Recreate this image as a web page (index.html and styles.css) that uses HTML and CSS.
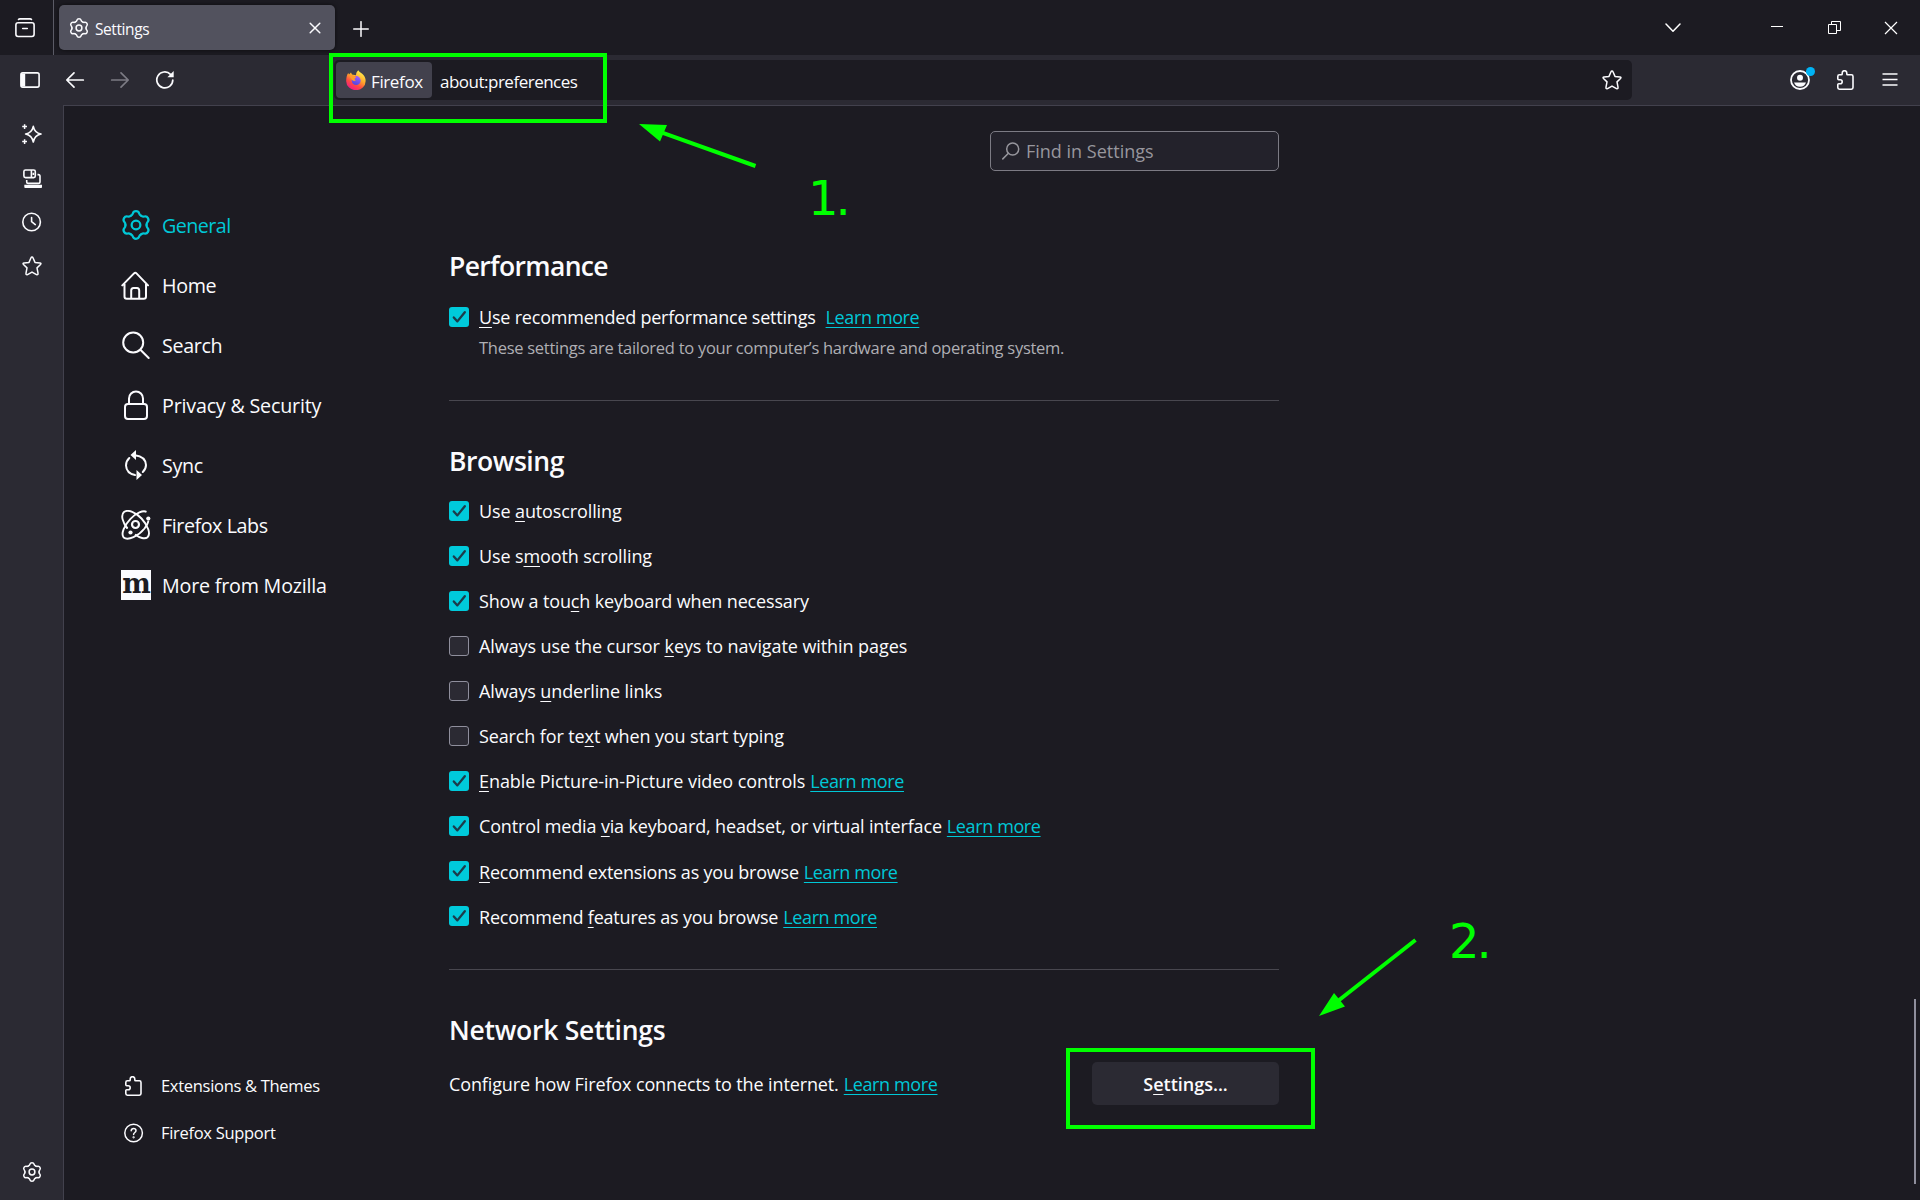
FILE: index.html
```html
<!DOCTYPE html>
<html lang="en">
<head>
<meta charset="utf-8">
<title>Settings</title>
<link rel="stylesheet" href="styles.css">
</head>
<body>
<svg class="defs" aria-hidden="true">
  <defs>
    <path id="tooth" d="M-3.5-6.1Q-2.4-6.65-2.1-7.7Q-1.7-9.2 0-9.2Q1.7-9.2 2.1-7.7Q2.4-6.65 3.5-6.1"/>
    <symbol id="gear" viewBox="-10 -10 20 20">
      <g fill="none" stroke="currentColor" stroke-width="1.5" stroke-linecap="round">
        <use href="#tooth"/><use href="#tooth" transform="rotate(60)"/><use href="#tooth" transform="rotate(120)"/>
        <use href="#tooth" transform="rotate(180)"/><use href="#tooth" transform="rotate(240)"/><use href="#tooth" transform="rotate(300)"/>
        <circle r="2.9"/>
      </g>
    </symbol>
    <symbol id="puzzle" viewBox="0 0 20 20">
      <path d="M3.4 4.8H5.4Q6.2 4.8 6.2 4V3a2.3 2.3 0 0 1 4.6 0V4Q10.8 4.8 11.6 4.8H15.4Q17 4.8 17 6.4V17.6Q17 19.2 15.4 19.2H3.4Q1.8 19.2 1.8 17.6V14.6Q1.8 13.7 2.7 13.7H4.2a2 2 0 0 0 0-4H2.7Q1.8 9.7 1.8 8.8V6.4Q1.8 4.8 3.4 4.8Z" fill="none" stroke="currentColor" stroke-width="1.6"/>
    </symbol>
    <symbol id="star" viewBox="0 0 20 20">
      <path d="M10 1.1Q10.7 1.1 11.1 2L13 6.4L17.9 6.9Q19.7 7.2 18.5 8.5L15 11.9L16 17.2Q16.2 19.2 14.5 18.6L10 16.1L5.500 18.6Q3.8 19.2 4 17.2L5 11.900L1.500 8.500Q.3 7.200 2.100 6.900L7 6.400L8.900 2Q9.300 1.100 10 1.100Z" fill="none" stroke="currentColor" stroke-width="1.5" stroke-linejoin="round"/>
    </symbol>
    <symbol id="tick" viewBox="0 0 20 20">
      <path d="M4.800 10.400L8.400 14.400L15.800 5.200" fill="none" stroke="#1c3b4a" stroke-width="2.300" stroke-linecap="round" stroke-linejoin="round"/>
    </symbol>
  </defs>
</svg>

<header class="titlebar">
  <div class="view-button">
    <svg class="i20" viewBox="0 0 20 20" fill="none" stroke="currentColor" stroke-width="1.600" stroke-linecap="round"><path d="M3.500 1.500Q4 .9 5 .9H15Q16 .9 16.500 1.500"/><rect x=".9" y="4.800" width="18.200" height="13.700" rx="2.200"/><path d="M7.700 10.500H12.300"/></svg>
  </div>
  <div class="tab">
    <svg class="i20"><use href="#gear"/></svg>
    <span class="tab-title">Settings</span>
    <svg class="tab-close" viewBox="0 0 12 12"><path d="M1.200 1.200L10.800 10.800M10.800 1.200L1.200 10.800"/></svg>
  </div>
  <svg class="new-tab" viewBox="0 0 16 16"><path d="M8 .7V15.300M.7 8H15.300"/></svg>
  <div class="window-buttons">
    <svg class="w-list" viewBox="0 0 16 10"><path d="M1 1L8 8.200L15 1"/></svg>
    <svg class="w-min" viewBox="0 0 12 13"><path d="M0 5.500H12"/></svg>
    <svg class="w-restore" viewBox="0 0 13 13"><path d="M.5 3.500H8.500V12.500H.5ZM3.500 3.500V.5H12.500V9.500H8.500"/></svg>
    <svg class="w-close" viewBox="0 0 14 14"><path d="M1 1L13 13M13 1L1 13"/></svg>
  </div>
</header>

<div class="toolbar">
  <svg class="i20 t-side" viewBox="0 0 20 20"><rect x=".9" y="2.900" width="18.200" height="14.200" rx="1.800" fill="none" stroke="currentColor" stroke-width="1.600"/><path d="M1 3.500H5.200V16.500H1Z" fill="currentColor"/></svg>
  <svg class="i20 t-back" viewBox="0 0 20 20"><path d="M18.300 10H2M9 2.800L1.800 10L9 17.200"/></svg>
  <svg class="i20 t-forward" viewBox="0 0 20 20"><path d="M1.700 10H18M11 2.800L18.200 10L11 17.200"/></svg>
  <svg class="i20 t-reload" viewBox="0 0 20 20"><path d="M17.800 10A8 8 0 1 1 15.500 4.300"/><path d="M18.700 1V7.300H12.400Z" fill="currentColor" stroke="none"/></svg>
  <div class="urlbar">
    <div class="identity">
      <svg class="i20" viewBox="0 0 20 20">
        <defs>
          <linearGradient id="flame" x1=".8" y1=".05" x2=".25" y2="1"><stop offset="0" stop-color="#fff44f"/><stop offset=".4" stop-color="#ffa72a"/><stop offset=".68" stop-color="#ff4a42"/><stop offset="1" stop-color="#f0148c"/></linearGradient>
          <linearGradient id="globe" x1=".7" y1="0" x2=".3" y2="1"><stop offset="0" stop-color="#a35cff"/><stop offset="1" stop-color="#4c46dd"/></linearGradient>
        </defs>
        <path d="M12.300.2C13.500 2.400 16.200 3.200 17.200 4.800C18.900 6.500 19.800 9 19.600 11.200A9.700 8.900 0 0 1 .2 11.300C.1 8.500.8 5 2.200 3L3 4.600L5 2.400L6 4.500L10 5.200C10 3 11 1.200 12.300.2Z" fill="url(#flame)"/>
        <circle cx="10.200" cy="10.600" r="4.500" fill="url(#globe)"/>
        <path d="M3.800 6.500C6 4.800 9.200 5.600 10.300 7.800C8.200 7.800 8 9.600 9.800 10.200C8.300 11.900 5.800 10.500 5.300 8.600Z" fill="#ff9a2c"/>
      </svg>
      <span>Firefox</span>
    </div>
    <span class="url">about:preferences</span>
    <svg class="i20 bookmark"><use href="#star"/></svg>
  </div>
  <div class="actions">
    <div class="account">
      <svg class="i20" viewBox="0 0 20 20"><circle cx="10" cy="10" r="9" fill="none" stroke="currentColor" stroke-width="1.800"/><circle cx="10" cy="7.800" r="3" fill="currentColor"/><path d="M4 12.500H16Q14.500 16.700 10 16.700Q5.500 16.700 4 12.500Z" fill="currentColor"/></svg>
      <i class="dot"></i>
    </div>
    <svg class="i20"><use href="#puzzle"/></svg>
    <svg class="i20 menu" viewBox="0 0 20 20"><path d="M2.500 4H17.500M2.500 9.500H17.500M2.500 15H17.500"/></svg>
  </div>
</div>

<div class="body">
  <aside class="sidebar">
    <svg class="i20" viewBox="0 0 20 20"><path d="M11.300 2.300Q12.500 8.700 19 10Q12.500 11.300 11.300 18Q10 11.300 3.600 10Q10 8.700 11.300 2.300Z" fill="none" stroke="currentColor" stroke-width="1.600" stroke-linejoin="round"/><path d="M2.600.2V5M.2 2.600H5M2.600 15.200V20M.2 17.600H5" stroke="currentColor" stroke-width="1.500"/></svg>
    <svg class="i20" viewBox="0 0 20 20" fill="none" stroke="currentColor" stroke-width="1.600"><rect x="1.900" y="2" width="11.400" height="7.600" rx="1.600"/><path d="M9.400 2V9.500M11.400 4.700V7M4.700 12V13.700Q4.700 15.400 6.400 15.400H16.300Q18 15.400 18 13.700V8.300Q18 6.600 16.300 6.600H15.500"/><path d="M2.300 16.800H20V19.600Q20 20 19 20H3.300Q2.300 20 2.300 19.200Z" fill="currentColor" stroke="none"/></svg>
    <svg class="i20" viewBox="0 0 20 20" fill="none" stroke="currentColor" stroke-width="1.600" stroke-linecap="round"><circle cx="9.600" cy="10" r="8.800"/><path d="M9.600 5.500V9.700L13.300 12.600"/></svg>
    <svg class="i20"><use href="#star"/></svg>
    <svg class="i20 side-gear"><use href="#gear"/></svg>
  </aside>

  <main class="page">
    <nav class="categories">
      <a class="category selected"><svg class="i30"><use href="#gear"/></svg><span class="c-general">General</span></a>
      <a class="category"><svg class="i30" viewBox="0 0 30 30" fill="none" stroke="currentColor" stroke-width="2" stroke-linecap="round" stroke-linejoin="round"><path d="M1.300 15.400L13 3.400Q14.300 2.200 15.500 3.400L27 15.400M3.500 14V26.500Q3.500 28.800 5.800 28.800H22.800Q25 28.800 25 26.500V14M10.200 28.500V20.500Q10.200 18 12.500 18H16Q18.200 18 18.200 20.500V28.500"/></svg><span>Home</span></a>
      <a class="category"><svg class="i30" viewBox="0 0 30 30" fill="none" stroke="currentColor" stroke-width="2" stroke-linecap="round"><circle cx="12.200" cy="12.500" r="10"/><path d="M19.400 19.700L27.700 28"/></svg><span>Search</span></a>
      <a class="category"><svg class="i30" viewBox="0 0 30 30" fill="none" stroke="currentColor" stroke-width="2"><rect x="4" y="14" width="22" height="15" rx="3"/><path d="M8 14V8.500A7 7 0 0 1 22 8.500V14"/></svg><span class="c-privacy">Privacy &amp; Security</span></a>
      <a class="category"><svg class="i30" viewBox="0 0 30 30" fill="none" stroke="currentColor" stroke-width="2" stroke-linecap="round"><path d="M8.300 8Q5 11 5 15.500Q5.500 23.500 14 25M14 5.200Q24.500 6.500 25 15Q25 19 21.800 22"/><path d="M9.500 5L15 0V10ZM21 25L15.500 20V30Z" fill="currentColor" stroke="none"/></svg><span>Sync</span></a>
      <a class="category"><svg class="i30" viewBox="0 0 30 30" fill="none" stroke="currentColor" stroke-width="1.900"><path d="M6.500 18.500C1.500 12.500-.5 5 3 2C7-1 15 2.500 20.500 8.500C27 15.500 30 24 26.500 27.300C24 29.500 18.500 27.800 14 24.500"/><path d="M23.500 18.500C17.500 26 7 31 2.700 27.500C-.5 24 3.500 15 9.500 8.800C15.500 2.500 22 .3 25.500 1.800M6.500 18.500Q4.800 16.500 3.500 14M23.500 18.500Q27.500 13 27.300 10.500"/><circle cx="14.500" cy="14.500" r="3.500" stroke-width="2.200"/><circle cx="27.300" cy="8.500" r="2.100" fill="currentColor" stroke="none"/><circle cx="9.500" cy="22.500" r="2.100" fill="currentColor" stroke="none"/></svg><span class="c-labs">Firefox Labs</span></a>
      <a class="category"><svg class="i30" viewBox="0 0 30 30"><path d="M0 0H30V30H0Z" fill="#fbfbfe"/><text class="mozilla" x="15.500" y="23" text-anchor="middle">m</text></svg><span class="c-more">More from Mozilla</span></a>
      <div class="footer-links">
        <a class="footer-link"><svg class="i20"><use href="#puzzle"/></svg><span>Extensions &amp; Themes</span></a>
        <a class="footer-link"><svg class="i20" viewBox="0 0 20 20" fill="none" stroke="currentColor" stroke-width="1.500" stroke-linecap="round"><circle cx="9.600" cy="10" r="8.800"/><path d="M7.200 7.700Q7.400 5.500 9.600 5.500Q11.900 5.500 12 7.500Q12 8.700 10.800 9.500Q9.600 10.300 9.600 11.500"/><circle cx="9.600" cy="14.300" r=".4" fill="currentColor"/></svg><span>Firefox Support</span></a>
      </div>
    </nav>

    <div class="pane">
      <div class="search-box">
        <svg class="glass" viewBox="0 0 18 18"><circle cx="10.700" cy="7" r="6"/><path d="M6.400 11.300L.8 16.900"/></svg>
        <span>Find in Settings</span>
      </div>

      <section class="performance">
        <h2>Performance</h2>
        <div class="check"><i class="box on"><svg><use href="#tick"/></svg></i><span class="tighter"><u>U</u>se recommended performance settings</span><a class="link far">Learn more</a></div>
        <p class="desc">These settings are tailored to your computer’s hardware and operating system.</p>
      </section>

      <section class="browsing">
        <h2>Browsing</h2>
        <div class="check"><i class="box on"><svg><use href="#tick"/></svg></i><span>Use <u>a</u>utoscrolling</span></div>
        <div class="check"><i class="box on"><svg><use href="#tick"/></svg></i><span>Use s<u>m</u>ooth scrolling</span></div>
        <div class="check"><i class="box on"><svg><use href="#tick"/></svg></i><span class="tight">Show a tou<u>c</u>h keyboard when necessary</span></div>
        <div class="check"><i class="box"></i><span class="wide">Always use the cursor <u>k</u>eys to navigate within pages</span></div>
        <div class="check"><i class="box"></i><span>Always <u>u</u>nderline links</span></div>
        <div class="check"><i class="box"></i><span>Search for te<u>x</u>t when you start typing</span></div>
        <div class="check"><i class="box on"><svg><use href="#tick"/></svg></i><span class="wide"><u>E</u>nable Picture-in-Picture video controls</span><a class="link">Learn more</a></div>
        <div class="check"><i class="box on"><svg><use href="#tick"/></svg></i><span class="tight">Control media <u>v</u>ia keyboard, headset, or virtual interface</span><a class="link">Learn more</a></div>
        <div class="check low"><i class="box on"><svg><use href="#tick"/></svg></i><span class="tighter"><u>R</u>ecommend extensions as you browse</span><a class="link">Learn more</a></div>
        <div class="check low"><i class="box on"><svg><use href="#tick"/></svg></i><span class="tighter">Recommend <u>f</u>eatures as you browse</span><a class="link">Learn more</a></div>
      </section>

      <section class="network">
        <h2>Network Settings</h2>
        <div class="network-row">
          <span>Configure how Firefox connects to the internet.</span><a class="link">Learn more</a>
          <button class="settings-button">S<u>e</u>ttings...</button>
        </div>
      </section>
    </div>
    <div class="scrollbar"></div>
  </main>
</div>

<div class="mark-box mark-url"></div>
<div class="mark-box mark-settings"></div>
<svg class="arrows" viewBox="0 0 1920 1200">
  <path d="M755.500 166L660 131.800M1415.500 940L1336 1002.500" stroke="#0f0" stroke-width="4" fill="none"/>
  <path d="M639 124L667 125L660 141.500ZM1319 1016L1334 993L1345 1006.500Z" fill="#0f0"/>
</svg>
<span class="step step-one">1.</span>
<span class="step step-two">2.</span>
</body>
</html>
```
FILE: styles.css
```css
* { box-sizing: border-box; }
body {
  margin: 0;
  width: 1920px;
  height: 1200px;
  overflow: hidden;
  display: flex;
  flex-direction: column;
  background: #1c1b22;
  color: #fbfbfe;
  font-family: "Open Sans", "Noto Sans", sans-serif;
}
svg { display: block; flex: none; }
.defs { position: absolute; width: 0; height: 0; }
.i20 { width: 20px; height: 20px; }
.i30 { width: 30px; height: 30px; }
i { font-style: normal; }
u { text-decoration: underline; text-decoration-thickness: 1px; text-underline-offset: 3px; text-decoration-skip-ink: none; }

/* Title bar */
.titlebar { height: 55px; display: flex; align-items: center; flex: none; }
.view-button { width: 54px; height: 55px; padding: 18px 0 0 15px; border-right: 1px solid #5b5b66; }
.tab {
  width: 276px; height: 45px; margin-left: 5px; padding: 0 14px 0 10px;
  display: flex; align-items: center; border-radius: 5px;
  background: #52525e; box-shadow: 0 0 4px rgba(0, 0, 0, .6);
}
.tab-title { margin-left: 6px; padding-top: 2px; font-size: 15.500px; letter-spacing: -.42px; }
.tab-close { width: 12px; height: 12px; margin-left: auto; }
.new-tab { width: 16px; height: 16px; margin: 2px 0 0 18px; }
.tab-close path, .new-tab path, .w-list path { fill: none; stroke: currentColor; stroke-width: 1.500; stroke-linecap: round; stroke-linejoin: round; }
.window-buttons { margin-left: auto; display: flex; align-items: center; padding-right: 22px; }
.window-buttons path { fill: none; stroke: #fff; }
.w-list { width: 16px; height: 10px; margin-right: 90px; }
.w-min { width: 12px; height: 13px; margin-right: 45px; }
.w-restore { width: 13px; height: 13px; margin-right: 43px; }
.w-close { width: 14px; height: 14px; }
.w-close path { stroke-width: 1.200; }

/* Toolbar */
.toolbar { height: 50px; flex: none; display: flex; align-items: center; background: #2b2a33; padding: 0 20px; }
.toolbar > svg path { stroke-linecap: round; stroke-linejoin: round; }
.t-back, .t-forward, .t-reload { fill: none; stroke: currentColor; stroke-width: 1.700; }
.t-back { margin-left: 25px; }
.t-forward { margin-left: 25px; color: #7c7b84; }
.t-reload { margin-left: 25px; }
.urlbar { width: 1298px; height: 40px; margin-left: 159px; padding: 0 10px 0 2px; display: flex; align-items: center; background: #1c1b22; border-radius: 5px; }
.identity { width: 96px; height: 36px; padding-left: 10px; display: flex; align-items: center; background: #42414d; border-radius: 4px; font-size: 17px; letter-spacing: -.38px; }
.identity span { margin-left: 5px; padding-top: 3px; }
.url { margin-left: 8px; padding-top: 3px; font-size: 17px; letter-spacing: -.5px; }
.bookmark { margin-left: auto; }
.actions { margin-left: auto; display: flex; align-items: center; gap: 26px; }
.account { position: relative; }
.dot { position: absolute; left: 16px; top: -3px; width: 9px; height: 9px; border-radius: 50%; background: #00b3f4; }
.menu { margin-left: -2px; fill: none; stroke: currentColor; stroke-width: 1.500; }

.body { flex: 1; display: flex; min-height: 0; }
.sidebar { width: 63px; padding: 19px 0 18px 22px; display: flex; flex-direction: column; gap: 24px; background: #2b2a33; }
.side-gear { margin-top: auto; }
.page { flex: 1; display: flex; border-left: 1px solid #42414d; border-top: 1px solid #42414d; }

/* Category list */
.categories { width: 385px; padding: 89px 0 44px 57px; display: flex; flex-direction: column; }
.category { height: 60px; display: flex; align-items: center; gap: 11px; font-size: 19.700px; letter-spacing: -.35px; }
.category span { padding-top: 1px; }
.category .c-general { letter-spacing: -.55px; }
.category .c-labs { letter-spacing: -.43px; }
.category .c-privacy, .category .c-more { letter-spacing: -.2px; }
.selected { color: #00c8d7; }
.mozilla { font: bold 27px "DejaVu Serif", serif; fill: #1c1b22; letter-spacing: 0; }
.footer-links { margin-top: auto; padding-left: 3px; }
.footer-link { height: 47px; display: flex; align-items: center; gap: 17px; font-size: 16.500px; letter-spacing: -.3px; }

/* Settings pane */
.pane { width: 830px; padding-top: 25px; font-size: 18px; letter-spacing: -.12px; }
.search-box { width: 289px; height: 40px; margin-left: 541px; padding: 0 11px; display: flex; align-items: center; gap: 6px; border: 1px solid #7c7b84; border-radius: 5px; background: #23222b; color: #97969d; }
.search-box span { padding-bottom: 1px; letter-spacing: 0; }
.glass { width: 18px; height: 18px; fill: none; stroke: currentColor; stroke-width: 1.500; stroke-linecap: round; }
h2 { margin: 0; font-size: 26.500px; line-height: 36px; font-weight: 600; letter-spacing: -.35px; }
section { border-bottom: 1px solid #48474f; }
.performance { height: 230px; padding-top: 77px; }
.performance h2 { margin-bottom: 17px; letter-spacing: -.65px; }
.desc { margin: 3px 0 0 30px; font-size: 16.500px; line-height: 24px; letter-spacing: -.275px; color: #afafb4; }
.browsing { height: 569px; padding-top: 42px; }
.browsing h2 { margin-bottom: 9px; letter-spacing: -.45px; }
.browsing .check { height: 45px; }
.check { height: 32px; display: flex; align-items: center; white-space: nowrap; }
.box { width: 20px; height: 20px; margin-right: 10px; border: 1px solid #8f8f9d; border-radius: 3px; background: #2b2a33; }
.box.on { border: 0; background: #00cadb; }
.box svg { width: 20px; height: 20px; }
.low span, .low .link { padding-top: 2px; }
.tight { letter-spacing: -.155px; }
.tighter { letter-spacing: -.205px; }
.wide { letter-spacing: -.08px; }
.link { margin-left: 5px; color: #00c8d7; letter-spacing: -.38px; text-decoration: underline; text-decoration-thickness: 1px; text-underline-offset: 3px; text-decoration-skip-ink: none; }
.link.far { margin-left: 10px; }
.network { padding-top: 42px; border: 0; }
.network h2 { letter-spacing: -.25px; }
.network-row { height: 43px; margin-top: 14px; display: flex; align-items: center; }
.settings-button { width: 187px; height: 43px; margin-left: auto; padding: 0; border: 0; border-radius: 5px; background: #2b2a33; color: #fbfbfe; font: 600 18px "Open Sans", sans-serif; }
.scrollbar { width: 2px; height: 185px; margin: 893px 4px 0 auto; background: #8f8f9d; }

/* Annotations over the window */
.mark-box { position: absolute; border: 4px solid #0f0; }
.mark-url { left: 329px; top: 53px; width: 278px; height: 70px; }
.mark-settings { left: 1066px; top: 1048px; width: 249px; height: 81px; }
.arrows { position: absolute; left: 0; top: 0; width: 1920px; height: 1200px; }
.step { position: absolute; color: #0f0; font: 48px/56px "DejaVu Sans", sans-serif; letter-spacing: -3px; }
.step-one { left: 808px; top: 170px; }
.step-two { left: 1449px; top: 913px; }
```
